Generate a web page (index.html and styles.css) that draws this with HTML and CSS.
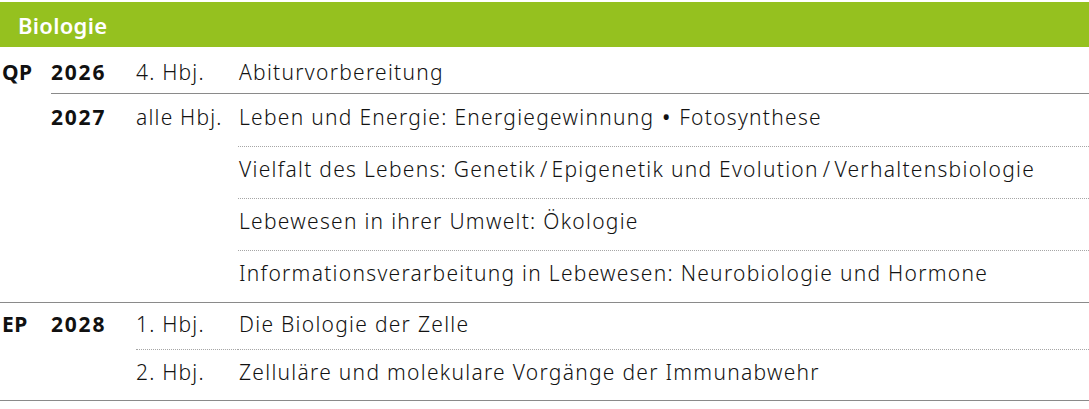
FILE: index.html
```html
<!DOCTYPE html>
<html lang="de">
<head>
<meta charset="utf-8">
<title>Biologie</title>
<link rel="stylesheet" href="styles.css">
</head>
<body>
<section class="plan">
  <h2 class="plan-title">Biologie</h2>
  <table class="plan-table">
    <colgroup>
      <col class="c-phase">
      <col class="c-year">
      <col class="c-term">
      <col class="c-topic">
    </colgroup>
    <tbody>
      <tr class="r-first">
        <td class="phase solid" rowspan="5">QP</td>
        <td class="year solid">2026</td>
        <td class="term solid">4. Hbj.</td>
        <td class="topic solid">Abiturvorbereitung</td>
      </tr>
      <tr class="r-second">
        <td class="year solid" rowspan="4">2027</td>
        <td class="term solid" rowspan="4">alle Hbj.</td>
        <td class="topic dotted">Leben und Energie: Energiegewinnung <span class="bullet">•</span> Fotosynthese</td>
      </tr>
      <tr class="r-mid">
        <td class="topic dotted">Vielfalt des Lebens: Genetik<span class="slash">/</span>Epigenetik und Evolution<span class="slash">/</span>Verhaltensbiologie</td>
      </tr>
      <tr class="r-mid">
        <td class="topic dotted">Lebewesen in ihrer Umwelt: Ökologie</td>
      </tr>
      <tr class="r-mid">
        <td class="topic solid">Informationsverarbeitung in Lebewesen: Neurobiologie und Hormone</td>
      </tr>
      <tr class="r-ep1">
        <td class="phase solid" rowspan="2">EP</td>
        <td class="year solid" rowspan="2">2028</td>
        <td class="term dotted">1. Hbj.</td>
        <td class="topic dotted">Die Biologie der Zelle</td>
      </tr>
      <tr class="r-ep2">
        <td class="term solid">2. Hbj.</td>
        <td class="topic solid">Zelluläre und molekulare Vorgänge der Immunabwehr</td>
      </tr>
    </tbody>
  </table>
</section>
</body>
</html>
```

FILE: styles.css
```css
html, body {
  margin: 0;
  padding: 0;
  background: #ffffff;
}

body {
  font-family: "Noto Sans", "Open Sans", "DejaVu Sans", sans-serif;
  color: #121212;
}

.plan {
  padding-top: 2px;
}

.plan-title {
  margin: 0;
  height: 45px;
  box-sizing: border-box;
  padding: 1px 18px 0;
  background: #95c11f;
  color: #ffffff;
  font-size: 22px;
  font-weight: 600;
  letter-spacing: 0.3px;
  line-height: 44px;
}

.plan-table {
  width: 100%;
  border-collapse: separate;
  border-spacing: 0;
  table-layout: fixed;
  font-size: 21px;
  font-weight: 350;
  line-height: 26px;
  letter-spacing: 1.28px;
}

.c-phase { width: 51px; }
.c-year { width: 85px; }
.c-term { width: 102px; }

.plan-table td {
  vertical-align: top;
  padding: 0;
  white-space: nowrap;
}

.phase {
  padding-left: 2px !important;
  font-weight: 700;
  color: #111111;
  letter-spacing: 0.5px;
}

.year {
  font-weight: 700;
  color: #111111;
  letter-spacing: 1.8px;
}

.term {
  letter-spacing: 1.2px;
}

.topic {
  padding-left: 1px !important;
}

.slash {
  margin: 0 3px 0 4px;
}

.bullet {
  font-weight: 500;
  margin: 0 1px;
}

.solid { border-bottom: 1px solid #8a8a8a; }
.dotted { border-bottom: 1px dotted #a6a6a6; }

.r-first td { padding-top: 12px; padding-bottom: 8px; }
.r-first .phase { padding-bottom: 0; }

.r-second td { padding-top: 10px; padding-bottom: 16px; }
.r-second .year,
.r-second .term { padding-bottom: 0; }

.r-mid td { padding-top: 9px; padding-bottom: 16px; }

.r-ep1 td { padding-top: 8px; padding-bottom: 12px; }
.r-ep1 .phase,
.r-ep1 .year { padding-bottom: 0; }

.r-ep2 td { padding-top: 9px; padding-bottom: 15px; }
```
